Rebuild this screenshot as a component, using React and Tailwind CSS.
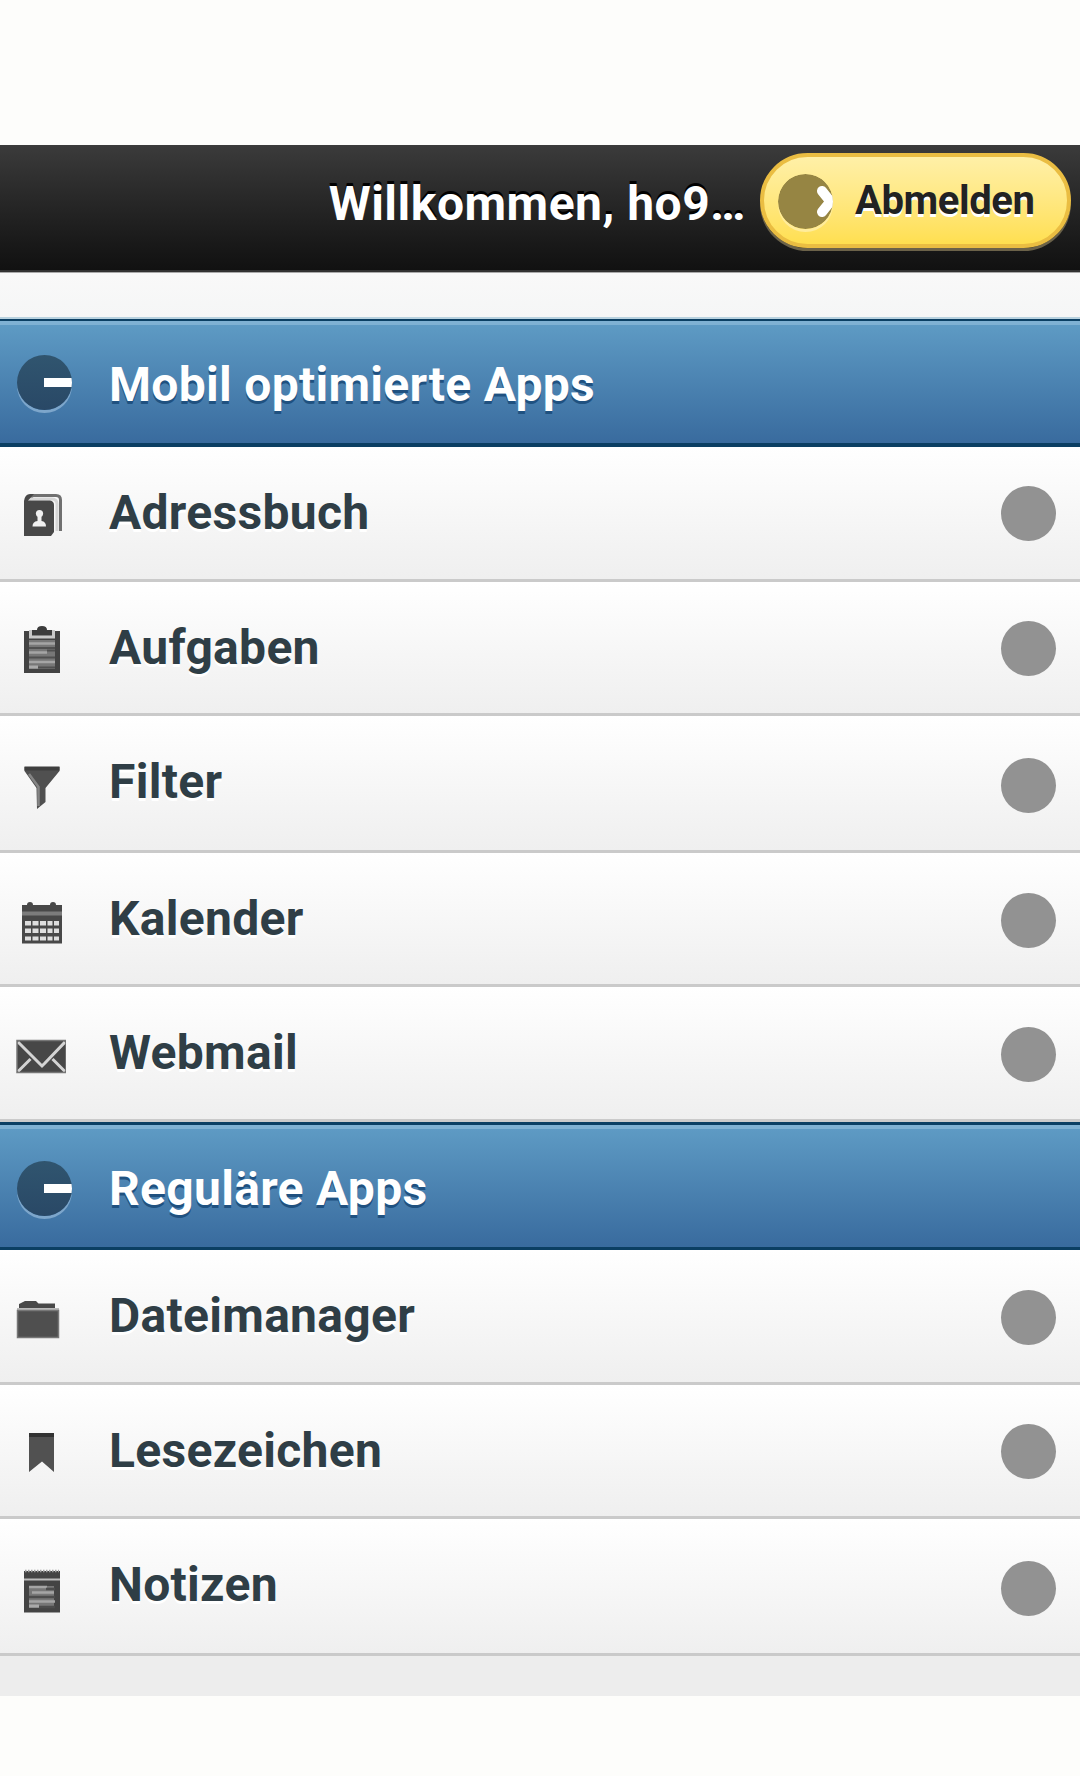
import React from "react";

const icons = {
  contacts: (
    <>
      <path d="M13 8.5 L17 4.500 H40 Q44.5 4.500 44.5 9 V40" fill="none" stroke="#707070" strokeWidth="3" />
      <path d="M11 8 H36 Q41 8 41 13 V40" fill="none" stroke="#d6d6d6" strokeWidth="3" />
      <path d="M8 10 Q9 3 14 3 H18 L12 9.500 H34 Q38 10 38 14 V41 L35 45 H8Z" fill="#484848" />
      <circle cx="23.5" cy="22.5" r="3.6" fill="#f0f0f0" />
      <path d="M21.5 24h4v6q4.500.5 4.500 5.500h-13.500q0-5 5-5.500z" fill="#f0f0f0" />
    </>
  ),
  tasks: (
    <>
      <path d="M8 5h36v42H8z" fill="#434343" />
      <path d="M14.500 4v7h23V4" fill="none" stroke="#c8c8c8" strokeWidth="3" />
      <path d="M16 4h5q0-4 5-4t5 4h5v5H16z" fill="#3c3c3c" />
      <path d="M13 14h26v29H13z" fill="#777" />
      <path d="M13 17.500h26M13 26.500h18M13 36h26" stroke="#a5a5a5" strokeWidth="2.500" />
      <path d="M13 22h26M31 24.500h8M13 31.500h26M22 41.500h17" stroke="#505050" strokeWidth="2" />
      <path d="M13 41h9" stroke="#aaa" strokeWidth="3" />
    </>
  ),
  filter: (
    <>
      <path d="M8.500 4H43.500V8L29.500 25V39L21 46L20.500 25L8.500 8Z" fill="#505050" />
      <path d="M8.500 3.500h35v4h-35z" fill="#3e3e3e" />
      <path d="M13 11 L22.500 24 V43" fill="none" stroke="#858585" strokeWidth="2.500" />
    </>
  ),
  calendar: (
    <>
      <path d="M6 7h5q0-3 3-3t3 3h17q0-3 3-3t3 3h6v38.500H6z" fill="#484848" />
      <path d="M6 15.500h40" stroke="#7c7c7c" strokeWidth="4" />
      <path
        d="M9 23h6v4.500H9zM16.500 23h6v4.500h-6zM24 23h6v4.500h-6zM31.500 23h5v4.500h-5zM38 23h5v4.500h-5zM9 30.500h6v4.500H9zM16.500 30.500h6v4.500h-6zM24 30.500h6v4.500h-6zM31.500 30.500h5v4.500h-5zM38 30.500h5v4.500h-5zM9 38.500h6v4H9zM16.500 38.500h6v4h-6zM24 38.500h6v4h-6zM31.500 38.500h5v4h-5zM38 38.500h5v4h-5z"
        fill="#dedede"
      />
    </>
  ),
  mail: (
    <>
      <path d="M1 9h49v32H1z" fill="#474747" />
      <path d="M2 10 L23 31 L26 34 L29 31 L49 10 M2 39.500 L14.500 27 M49 39.500 L36.500 27" fill="none" stroke="#d4d4d4" strokeWidth="3" />
      <path d="M1 8.500h49v32H1z" fill="none" stroke="#777" strokeWidth="1.500" />
    </>
  ),
  files: (
    <>
      <path d="M3 14V9L9 6H20L22.500 8.500H39V14Z" fill="#484848" />
      <path d="M1 14h42" stroke="#b9b9b9" strokeWidth="2" />
      <path d="M1.500 15.500h41v27h-41z" fill="#4f4f4f" stroke="#777" strokeWidth="1.500" />
    </>
  ),
  bookmark: (
    <>
      <path d="M13 4H38V43L26 32.500L13 43Z" fill="#515151" />
      <path d="M13 4h25v4H13z" fill="#333" />
    </>
  ),
  notes: (
    <>
      <path d="M8 5h36v41.500H8z" fill="#444" />
      <path d="M9 5h34" stroke="#a0a0a0" strokeWidth="2.500" strokeDasharray="1.500 1.500" />
      <path d="M8 13.500h36" stroke="#bcbcbc" strokeWidth="2" />
      <path d="M13 20h25v22H13z" fill="#777" />
      <path d="M13 21h18M16 26.500h22M13 35.500h26" stroke="#a5a5a5" strokeWidth="2.500" />
      <path d="M30 23h9M13 31h26M23 41h16" stroke="#4d4d4d" strokeWidth="2.500" />
      <path d="M13 40h10" stroke="#aaa" strokeWidth="3" />
    </>
  ),
};

const mobileApps = [
  { label: "Adressbuch", icon: "contacts", size: "h-[135px]", pad: "pt-[39px]" },
  { label: "Aufgaben", icon: "tasks", size: "h-[134px]", pad: "pt-[39px]" },
  { label: "Filter", icon: "filter", size: "h-[137px]", pad: "pt-[42px]" },
  { label: "Kalender", icon: "calendar", size: "h-[134px]", pad: "pt-[40px]" },
  { label: "Webmail", icon: "mail", size: "h-[135px]", pad: "pt-[40px]" },
];

const regularApps = [
  { label: "Dateimanager", icon: "files", size: "h-[135px]", pad: "pt-[40px]" },
  { label: "Lesezeichen", icon: "bookmark", size: "h-[134px]", pad: "pt-[39px]" },
  { label: "Notizen", icon: "notes", size: "h-[137px]", pad: "pt-[42px]" },
];

const AppRow = ({ label, icon, size, pad }) => (
  <li
    className={`${size} flex items-start border-b-[3px] border-[#cacaca] bg-linear-to-b from-white to-[#efefef] pl-4 pr-6`}
  >
    <div className={`${pad} w-[93px] shrink-0`}>
      <svg viewBox="0 0 50 50" className="mt-[5px] size-[50px]">
        {icons[icon]}
      </svg>
    </div>
    <span className="flex-1 pt-[38px] text-[48px] leading-[56px] font-bold tracking-[0.3px] text-[#2f3e46] [text-shadow:0_3px_0_#fff]">
      {label}
    </span>
    <div className={pad}>
      <div className="size-[55px] rounded-full bg-[#929292]" />
    </div>
  </li>
);

const SectionHeader = ({ title, border = "border-t-2 border-b-4", iconMargin = "mt-[34px]" }) => (
  <h2
    className={`${border} flex h-[128px] items-start border-[#0b3f63] bg-linear-to-b from-[#5f9cc5] to-[#396b9e] pl-[17px] shadow-[inset_0_4px_0_#7fb1d3]`}
  >
    <span
      className={`${iconMargin} flex size-[55px] shrink-0 items-center justify-end overflow-hidden rounded-full bg-linear-to-b from-[#30556f] to-[#294866] shadow-[0_3px_0_#7da6cb]`}
    >
      <span className="mb-[1px] h-[9px] w-[28px] bg-white" />
    </span>
    <span className="pt-[36px] pl-[37px] text-[48px] leading-[56px] font-bold tracking-[0.3px] text-white [text-shadow:0_3px_0_#1f5180]">
      {title}
    </span>
  </h2>
);

const TopBar = () => (
  <header className="flex h-[127px] items-start justify-end border-b-2 border-[#333] bg-linear-to-b from-[#3b3b3b] to-[#111] pr-[9px]">
    <h1 className="mr-[17px] pt-[31px] text-[48px] leading-[56px] font-bold tracking-[0.5px] text-white [text-shadow:0_-3px_0_#000]">
      Willkommen, ho9<span className="tracking-[-3px]">...</span>
    </h1>
    <button className="mt-[8px] flex h-[95px] w-[311px] items-center rounded-full border-4 border-[#eabd42] bg-linear-to-b from-[#fff0a7] to-[#ffdf4f] pl-[14px] shadow-[0_3px_0_#6b6249]">
      <svg viewBox="0 0 55 55" className="mt-px size-[55px] rounded-full shadow-[0_3px_0_#ffec9b]">
        <circle cx="27.500" cy="27.500" r="27.500" fill="#968543" />
        <path d="M44 17 L52.500 27.500 L44 38" fill="none" stroke="#fff" strokeWidth="10" strokeLinecap="round" />
      </svg>
      <span className="pl-[22px] text-[40px] leading-[48px] font-bold tracking-[-0.4px] text-[#222] [text-shadow:0_3px_0_#fff]">
        Abmelden
      </span>
    </button>
  </header>
);

export default function App() {
  return (
    <div className="h-[1776px] w-[1080px] overflow-hidden bg-[#fdfdfb] pt-[145px] font-['Roboto',sans-serif]">
      <main className="h-[1551px] bg-[#ededed]">
        <TopBar />
        <div className="h-[47px] border-t border-b-2 border-t-[#aaa] border-b-[#b8d2df] bg-linear-to-b from-[#f9f9f9] to-[#f5f6f6]" />
        <SectionHeader title="Mobil optimierte Apps" />
        <ul>
          {mobileApps.map((app) => (
            <AppRow key={app.label} {...app} />
          ))}
        </ul>
        <SectionHeader
          title="Reguläre Apps"
          border="border-t-[3px] border-b-[3px]"
          iconMargin="mt-[36px]"
        />
        <ul>
          {regularApps.map((app) => (
            <AppRow key={app.label} {...app} />
          ))}
        </ul>
      </main>
    </div>
  );
}
